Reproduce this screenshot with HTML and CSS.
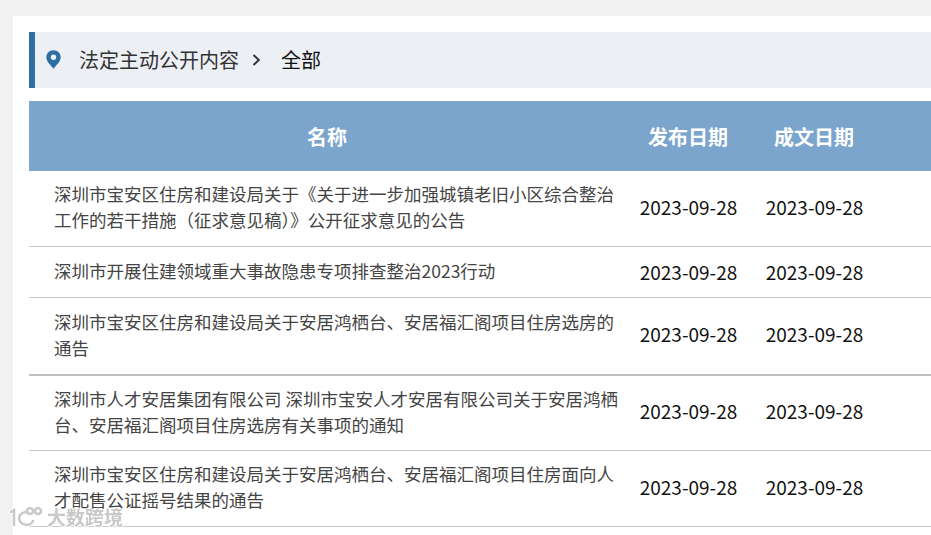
FILE: index.html
```html
<!DOCTYPE html>
<html lang="zh-CN">
<head>
<meta charset="utf-8">
<title>法定主动公开内容</title>
<link rel="stylesheet" href="styles.css">
</head>
<body>
<main class="panel">
  <nav class="crumb">
    <svg class="pin" viewBox="0 0 15 19" width="15" height="19"><path fill="#2e6fa3" fill-rule="evenodd" d="M7.500 0.200C3.400 0.200 0.300 3.300 0.300 7.300C0.300 11.600 5 15.500 7.500 18.800C10 15.500 14.700 11.600 14.700 7.300C14.700 3.300 11.600 0.200 7.500 0.200ZM7.500 4.600A2.700 2.700 0 1 1 7.500 10A2.700 2.700 0 1 1 7.500 4.600Z"/></svg>
    <span class="crumb-link">法定主动公开内容</span>
    <svg class="chev" viewBox="0 0 9 12" width="9" height="12"><path fill="none" stroke="#333" stroke-width="2" d="M1.500 1L6.800 6L1.500 11"/></svg>
    <span class="crumb-current">全部</span>
  </nav>
  <div class="table">
    <div class="row head">
      <div class="name">名称</div><div class="date">发布日期</div><div class="date">成文日期</div>
    </div>
    <div class="row r76">
      <div class="name">深圳市宝安区住房和建设局关于《关于进一步加强城镇老旧小区综合整治工作的若干措施（征求意见稿）》公开征求意见的公告</div><div class="date">2023-09-28</div><div class="date">2023-09-28</div>
    </div>
    <div class="row r51">
      <div class="name">深圳市开展住建领域重大事故隐患专项排查整治2023行动</div><div class="date">2023-09-28</div><div class="date">2023-09-28</div>
    </div>
    <div class="row r78">
      <div class="name">深圳市宝安区住房和建设局关于安居鸿栖台、安居福汇阁项目住房选房的通告</div><div class="date">2023-09-28</div><div class="date">2023-09-28</div>
    </div>
    <div class="row r75">
      <div class="name">深圳市人才安居集团有限公司 深圳市宝安人才安居有限公司关于安居鸿栖台、安居福汇阁项目住房选房有关事项的通知</div><div class="date">2023-09-28</div><div class="date">2023-09-28</div>
    </div>
    <div class="row r76">
      <div class="name">深圳市宝安区住房和建设局关于安居鸿栖台、安居福汇阁项目住房面向人才配售公证摇号结果的通告</div><div class="date">2023-09-28</div><div class="date">2023-09-28</div>
    </div>
  </div>
</main>
<div class="mark">
  <svg viewBox="0 0 34 20" width="34" height="20">
    <g class="halo"><path d="M2 5L5 3V18"/><path d="M17 5A8 8 0 0 0 10 11A7.500 7.500 0 0 0 24 14"/><circle cx="21" cy="4" r="3"/><circle cx="29" cy="4" r="3"/></g>
    <g class="ink"><path d="M2 5L5 3V18"/><path d="M17 5A8 8 0 0 0 10 11A7.500 7.500 0 0 0 24 14"/><circle cx="21" cy="4" r="3"/><circle cx="29" cy="4" r="3"/></g>
  </svg>
  <span class="mark-text">大数跨境</span>
</div>
</body>
</html>
```
FILE: styles.css
```css
html, body { margin: 0; height: 100%; overflow: hidden; }
body {
  background: #f1f1f1;
  font-family: "Noto Sans CJK SC", "Noto Sans", sans-serif;
  padding: 16px 0 0 13px;
  box-sizing: border-box;
}
.panel {
  background: #fff;
  padding: 16px 0 0 16px;
  height: 100%;
}
.crumb {
  display: flex;
  align-items: center;
  height: 56px;
  background: #eceff3;
  border-left: 6px solid #2e6fa3;
  padding-left: 11px;
  font-size: 20px;
  color: #333;
}
.pin { margin-right: 18px; margin-top: -2px; flex: none; }
.chev { margin: 0 20px 0 13px; flex: none; }
.crumb-link, .crumb-current { line-height: 56px; }
.crumb-current { color: #111; }
.table { margin-top: 13px; }
.row {
  display: flex;
  align-items: center;
  border-bottom: 1px solid #c8c8c8;
  box-sizing: border-box;
  color: #444;
  padding-bottom: 3px;
}
.head {
  height: 70px;
  background: #7ba5cd;
  color: #fff;
  font-weight: 700;
  font-size: 20px;
  border-bottom: 0;
  padding-bottom: 0;
}
.r75 { height: 75px; }
.r76 { height: 76px; }
.r78 { height: 78px; border-bottom: 2px solid #c0c0c0; }
.r51 { height: 51px; padding-bottom: 2px; }
.name {
  width: 596px;
  box-sizing: border-box;
  padding: 0 1px 0 25px;
  font-size: 17.5px;
  line-height: 26px;
}
.head .name { text-align: center; padding: 0; font-size: 20px; line-height: normal; }
.date {
  width: 126px;
  text-align: center;
  font-size: 19px;
  color: #111;
  padding: 0 0 2px 1px;
  box-sizing: border-box;
}
.r51 .date { padding-bottom: 0; }
.head .date { color: #fff; font-size: 20px; padding: 0; }
.mark {
  position: fixed;
  left: 9px;
  top: 507px;
  display: flex;
  align-items: center;
  gap: 4px;
}
.mark-text {
  color: #c8c8c8;
  font-size: 19px;
  line-height: 20px;
  font-weight: 700;
  text-shadow: 0 0 2px #fff, 1px 0 1px #fff, -1px 0 1px #fff, 0 1px 1px #fff;
}
.halo, .ink { fill: none; stroke-linecap: round; }
.halo { stroke: #fff; stroke-width: 4.500; }
.ink { stroke: #c8c8c8; stroke-width: 2.500; }
```
